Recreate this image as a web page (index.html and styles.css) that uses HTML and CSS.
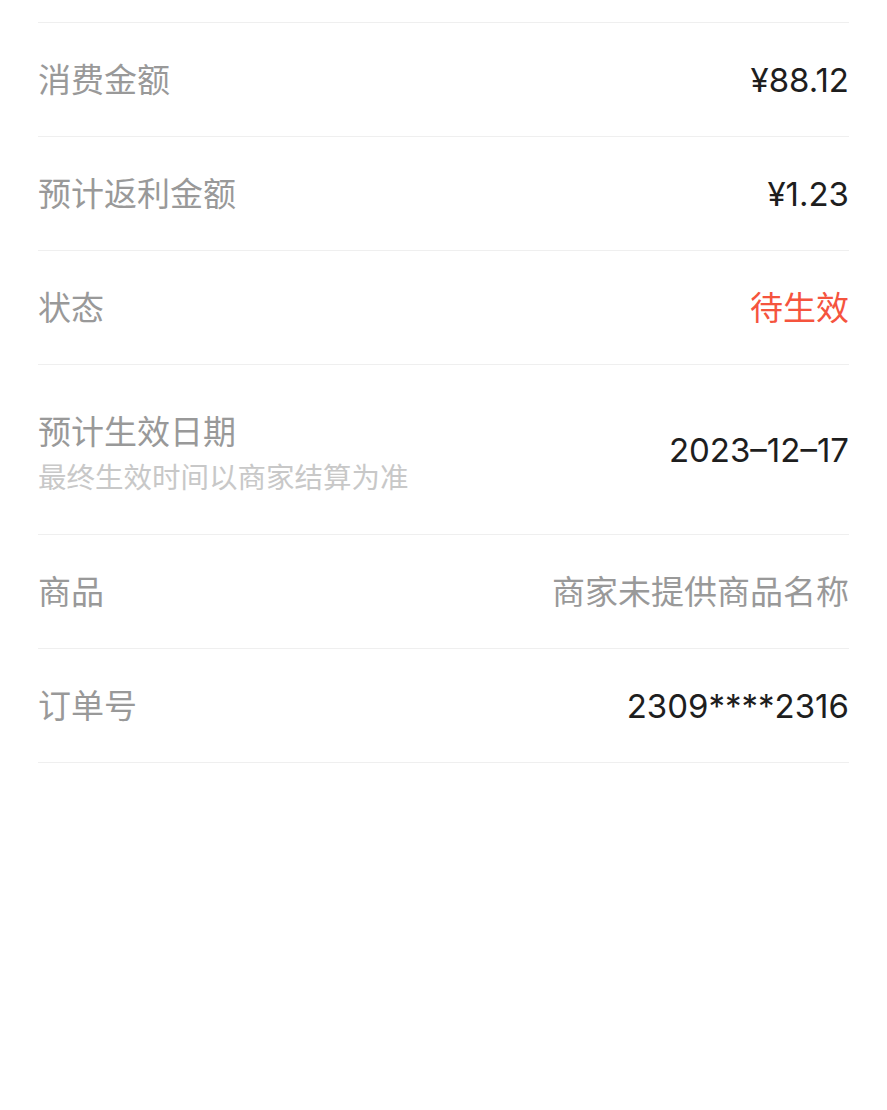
FILE: index.html
```html
<!DOCTYPE html>
<html lang="zh-CN">
<head>
    <meta charset="UTF-8">
    <meta name="viewport" content="width=device-width, initial-scale=1.0">
    <title>订单详情</title>
    <link rel="stylesheet" href="styles.css">
</head>
<body>
    <div class="detail">
        <div class="row">
            <div class="label">消费金额</div>
            <div class="value">¥88.12</div>
        </div>
        <div class="row">
            <div class="label">预计返利金额</div>
            <div class="value">¥1.23</div>
        </div>
        <div class="row">
            <div class="label">状态</div>
            <div class="value value-pending">待生效</div>
        </div>
        <div class="row row-tall">
            <div class="label-group">
                <div class="label">预计生效日期</div>
                <div class="hint">最终生效时间以商家结算为准</div>
            </div>
            <div class="value">2023–12–17</div>
        </div>
        <div class="row">
            <div class="label">商品</div>
            <div class="value value-muted">商家未提供商品名称</div>
        </div>
        <div class="row">
            <div class="label">订单号</div>
            <div class="value">2309****2316</div>
        </div>
    </div>
</body>
</html>
```

FILE: styles.css
```css
body {
    margin: 0;
    background: #fff;
    font-family: Inter, "Noto Sans CJK SC", sans-serif;
}
.detail {
    padding: 22px 38px 0;
}
.row {
    display: flex;
    justify-content: space-between;
    align-items: center;
    height: 113px;
    border-top: 1px solid #efefef;
}
.row:last-child { border-bottom: 1px solid #efefef; }
.row-tall { height: 169px; }
.label {
    font-size: 33px;
    line-height: 46px;
    color: #999;
}
.label-group { padding-top: 11px; }
.hint {
    font-size: 28.5px;
    line-height: 46px;
    color: #c8c8c8;
}
.value {
    font-size: 33px;
    line-height: 46px;
    color: #1e1e1e;
}
.value-pending { color: #f5543e; }
.value-muted { color: #999; }
```
